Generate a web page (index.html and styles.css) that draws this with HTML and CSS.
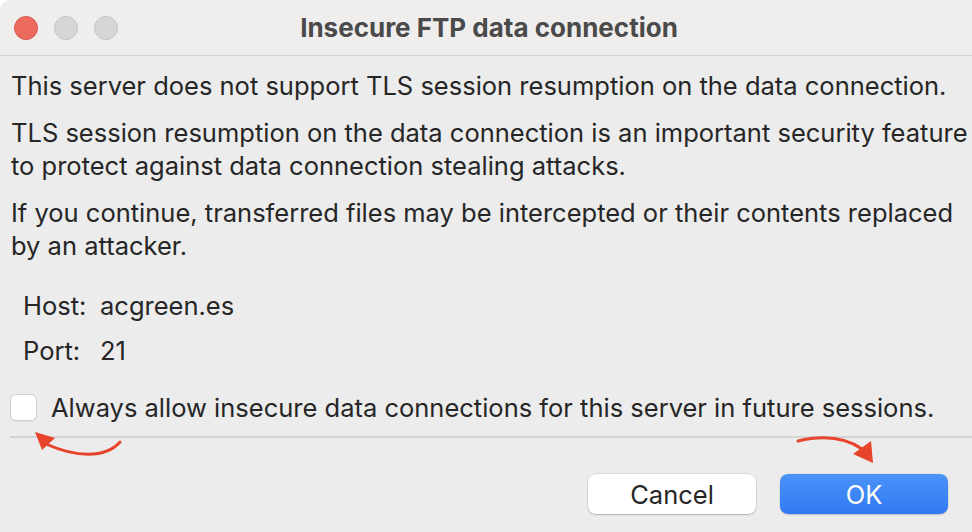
FILE: index.html
```html
<!DOCTYPE html>
<html>
<head>
<meta charset="utf-8">
<link rel="stylesheet" href="styles.css">
</head>
<body>
<div class="window">
  <div class="titlebar">
    <div class="lights">
      <span class="light red"></span>
      <span class="light gray"></span>
      <span class="light gray"></span>
    </div>
    <div class="title">Insecure FTP data connection</div>
  </div>
  <div class="content">
    <p class="para">This server does not support TLS session resumption on the data connection.</p>
    <p class="para">TLS session resumption on the data connection is an important security feature to protect against data connection stealing attacks.</p>
    <p class="para">If you continue, transferred files may be intercepted or their contents replaced by an attacker.</p>
    <div class="details">
      <div class="label">Host:</div><div class="value">acgreen.es</div>
      <div class="label">Port:</div><div class="value">21</div>
    </div>
    <label class="check-row">
      <span class="checkbox"></span>
      <span class="check-text">Always allow insecure data connections for this server in future sessions.</span>
    </label>
  </div>
  <div class="separator"></div>
  <div class="buttons">
    <button class="btn cancel">Cancel</button>
    <button class="btn ok">OK</button>
  </div>
  <svg class="arrow arrow-left" width="110" height="50" viewBox="0 0 110 50">
    <path d="M90 15 C 75 32, 45 30, 16 17" fill="none" stroke="#e8432b" stroke-width="3" stroke-linecap="round"/>
    <path d="M5 5 L 12 23 L 25 11 Z" fill="#e8432b"/>
  </svg>
  <svg class="arrow arrow-right" width="100" height="50" viewBox="0 0 100 50">
    <path d="M4 9 C 30 3, 52 6, 68 17" fill="none" stroke="#e8432b" stroke-width="3" stroke-linecap="round"/>
    <path d="M79 31 L 59 22 L 77 9 Z" fill="#e8432b"/>
  </svg>
</div>
</body>
</html>
```

FILE: styles.css
```css
html, body {
  margin: 0;
  padding: 0;
  background: #ffffff;
  overflow: hidden;
}
body {
  width: 972px;
  height: 532px;
}
.window {
  position: relative;
  width: 986px;
  height: 532px;
  background: #ececec;
  border-top-left-radius: 11px;
  border-top-right-radius: 11px;
  overflow: hidden;
  font-family: "Inter", "Liberation Sans", sans-serif;
  color: #262626;
}
.titlebar {
  height: 55px;
  background: #efeeed;
  border-bottom: 1px solid #d2d2d2;
  display: flex;
  align-items: center;
  position: relative;
}
.lights {
  display: flex;
  gap: 16px;
  padding-left: 14px;
}
.light {
  width: 24px;
  height: 24px;
  border-radius: 50%;
  box-sizing: border-box;
}
.light.red {
  background: #ed6a5e;
  border: 1px solid #d5574b;
}
.light.gray {
  background: #d6d6d6;
  border: 1px solid #c2c2c2;
}
.title {
  flex: 1;
  text-align: center;
  margin-left: -118px;
  padding-right: 8px;
  font-weight: 700;
  font-size: 26px;
  color: #4a4a4a;
}
.content {
  padding: 13px 0 0 11px;
}
.para {
  margin: 0 0 14px 0;
  font-size: 25.5px;
  line-height: 33px;
}
.details {
  display: grid;
  grid-template-columns: 77px auto;
  row-gap: 12px;
  margin: 27px 0 0 12px;
  font-size: 25.5px;
  line-height: 33px;
}
.check-row {
  display: flex;
  align-items: center;
  gap: 14px;
  margin-top: 24px;
  margin-left: -1px;
  font-size: 25.5px;
  line-height: 33px;
}
.checkbox {
  flex: none;
  width: 27px;
  height: 27px;
  box-sizing: border-box;
  background: #ffffff;
  border: 1px solid #d0d0d0;
  border-radius: 6px;
  box-shadow: 0 1px 1px rgba(0,0,0,0.06);
}
.separator {
  height: 2px;
  background: #d3d3d3;
  margin: 12px 0 0 10px;
}
.buttons {
  display: flex;
  gap: 24px;
  padding: 36px 0 0 588px;
}
.btn {
  width: 168px;
  height: 40px;
  border-radius: 8px;
  font-family: "Inter", "Liberation Sans", sans-serif;
  font-size: 25.5px;
  border: none;
  padding: 0;
}
.btn.cancel {
  background: #ffffff;
  color: #262626;
  box-shadow: 0 0 0 0.5px rgba(0,0,0,0.15), 0 1px 1.5px rgba(0,0,0,0.2);
}
.btn.ok {
  background: linear-gradient(#4b93f8, #3079f2);
  color: #ffffff;
  box-shadow: 0 0 0 0.5px rgba(0,0,0,0.08), 0 1px 1.5px rgba(0,0,0,0.15);
}
.arrow {
  position: absolute;
}
.arrow-left {
  left: 30px;
  top: 427px;
}
.arrow-right {
  left: 794px;
  top: 432px;
}
```
